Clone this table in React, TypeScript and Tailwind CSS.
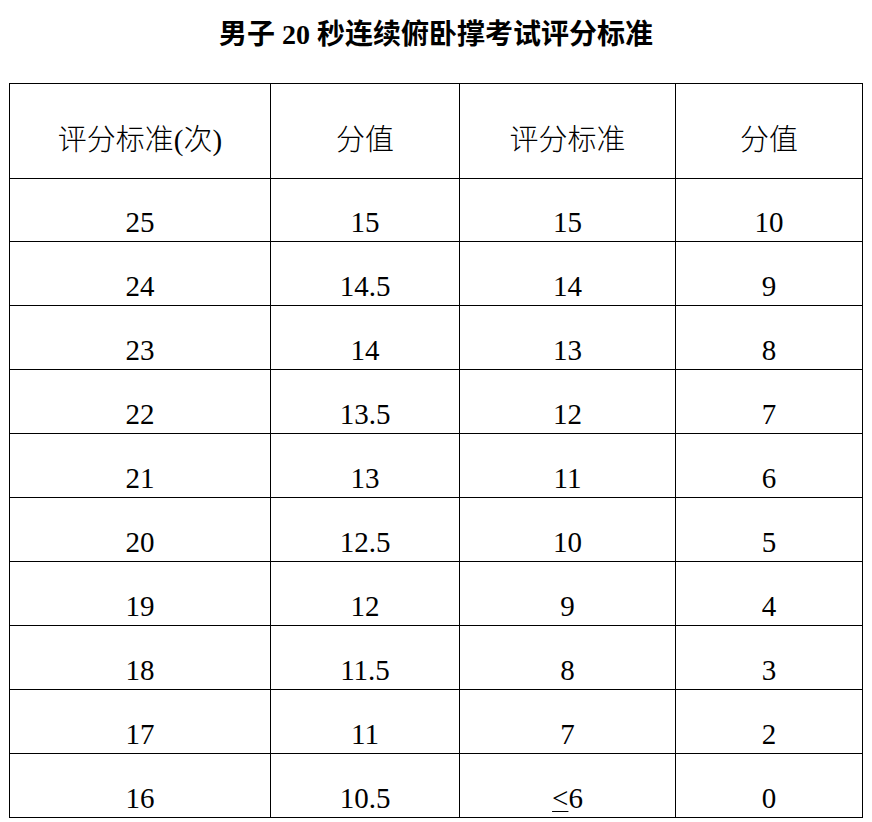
import React from "react";

const rows: [string, string, string, string][] = [
  ["25", "15", "15", "10"],
  ["24", "14.5", "14", "9"],
  ["23", "14", "13", "8"],
  ["22", "13.5", "12", "7"],
  ["21", "13", "11", "6"],
  ["20", "12.5", "10", "5"],
  ["19", "12", "9", "4"],
  ["18", "11.5", "8", "3"],
  ["17", "11", "7", "2"],
  ["16", "10.5", "≤6", "0"],
];

const cols = "grid grid-cols-[261px_189px_216px_187px]";
const cjk = { fontFamily: '"Liberation Serif", "Noto Sans CJK SC", serif' };

export default function App() {
  return (
    <div className="w-[872px] h-[822px] bg-white text-black overflow-hidden" style={cjk}>
      <div className="h-[83px] flex items-center justify-center pb-[13px]">
        <h1 className="text-[28px] leading-none font-bold">
          男子 20 秒连续俯卧撑考试评分标准
        </h1>
      </div>
      <div className="ml-[9px] w-[854px] border-t border-l border-black">
        <div className={cols}>
          {["评分标准(次)", "分值", "评分标准", "分值"].map((h, i) => (
            <div
              key={i}
              className="h-[95px] border-r border-b border-black flex items-center justify-center pt-[19px] text-[29px] leading-none font-light"
            >
              {h}
            </div>
          ))}
        </div>
        {rows.map((r, ri) => (
          <div key={ri} className={cols}>
            {r.map((c, ci) => (
              <div
                key={ci}
                className={`${ri === 0 ? "h-[63px]" : "h-[64px]"} border-r border-b border-black flex items-end justify-center pb-[4px] text-[29px] leading-none`}
              >
                {c === "≤6" ? (
                  <span>
                    <span className="underline decoration-1 underline-offset-[3px]">&lt;</span>6
                  </span>
                ) : (
                  c
                )}
              </div>
            ))}
          </div>
        ))}
      </div>
    </div>
  );
}
